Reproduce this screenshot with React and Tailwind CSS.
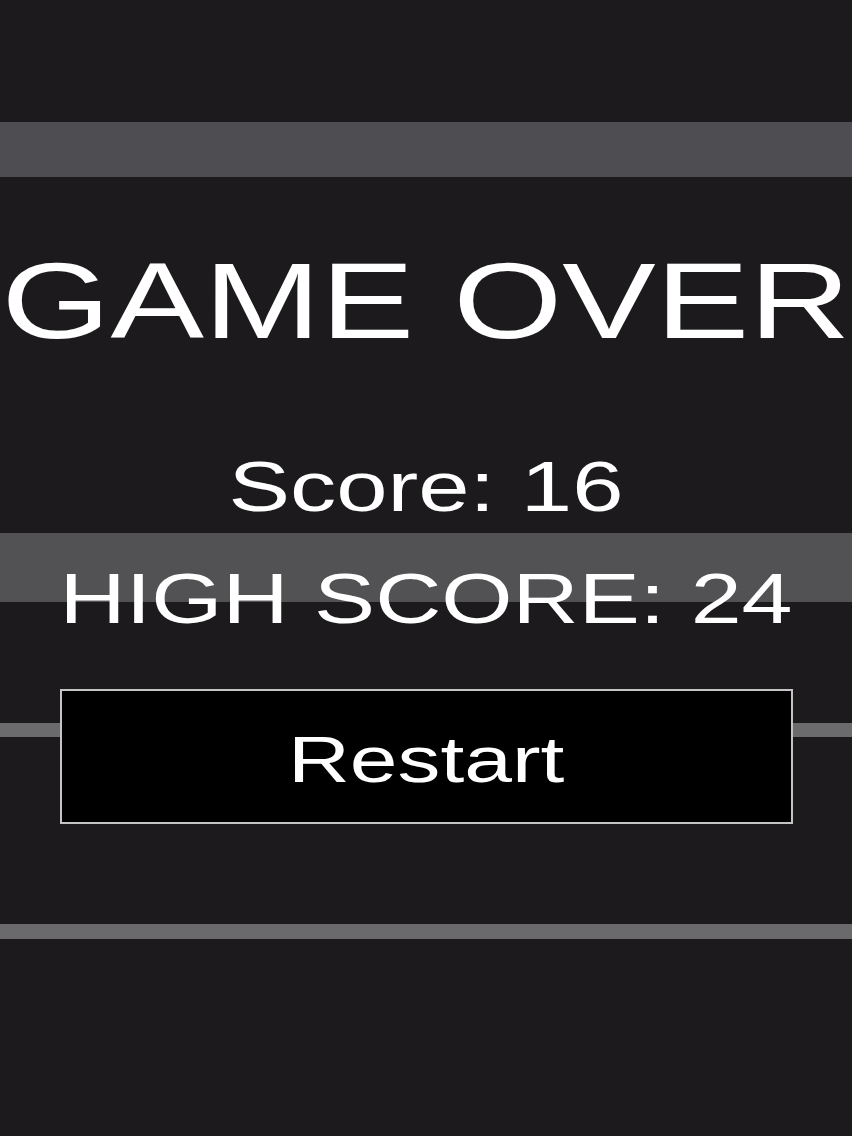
import React from "react";

const lanes = [
  { top: "top-[122px]", height: "h-[55px]", color: "bg-[#4e4d51]" },
  { top: "top-[533px]", height: "h-[69px]", color: "bg-[#525154]" },
  { top: "top-[723px]", height: "h-[14px]", color: "bg-[#6b6a6d]" },
  { top: "top-[924px]", height: "h-[15px]", color: "bg-[#6a696c]" },
];

export default function App() {
  return (
    <div
      className="relative h-[1136px] w-full overflow-hidden bg-[#1c1a1d] text-white"
      style={{ fontFamily: '"Liberation Sans", Arial, sans-serif' }}
    >
      {lanes.map((lane, i) => (
        <div
          key={i}
          className={`absolute left-0 right-0 ${lane.top} ${lane.height} ${lane.color}`}
        />
      ))}

      <div className="relative flex flex-col items-center pt-[248px]">
        <h1 className="inline-block scale-x-[1.31] text-[107px] leading-none font-normal">
          GAME OVER
        </h1>

        <p className="mt-[96px] inline-block scale-x-[1.3] text-[71px] leading-none">
          Score: 16
        </p>

        <p className="mt-[41px] inline-block scale-x-[1.29] text-[71px] leading-none">
          HIGH SCORE: 24
        </p>

        <button className="mt-[55px] flex h-[135px] w-[733px] items-center justify-center border-2 border-[#c4c4c4] bg-black pt-[7px]">
          <span className="inline-block scale-x-[1.34] text-[64px] leading-none text-white">
            Restart
          </span>
        </button>
      </div>
    </div>
  );
}
